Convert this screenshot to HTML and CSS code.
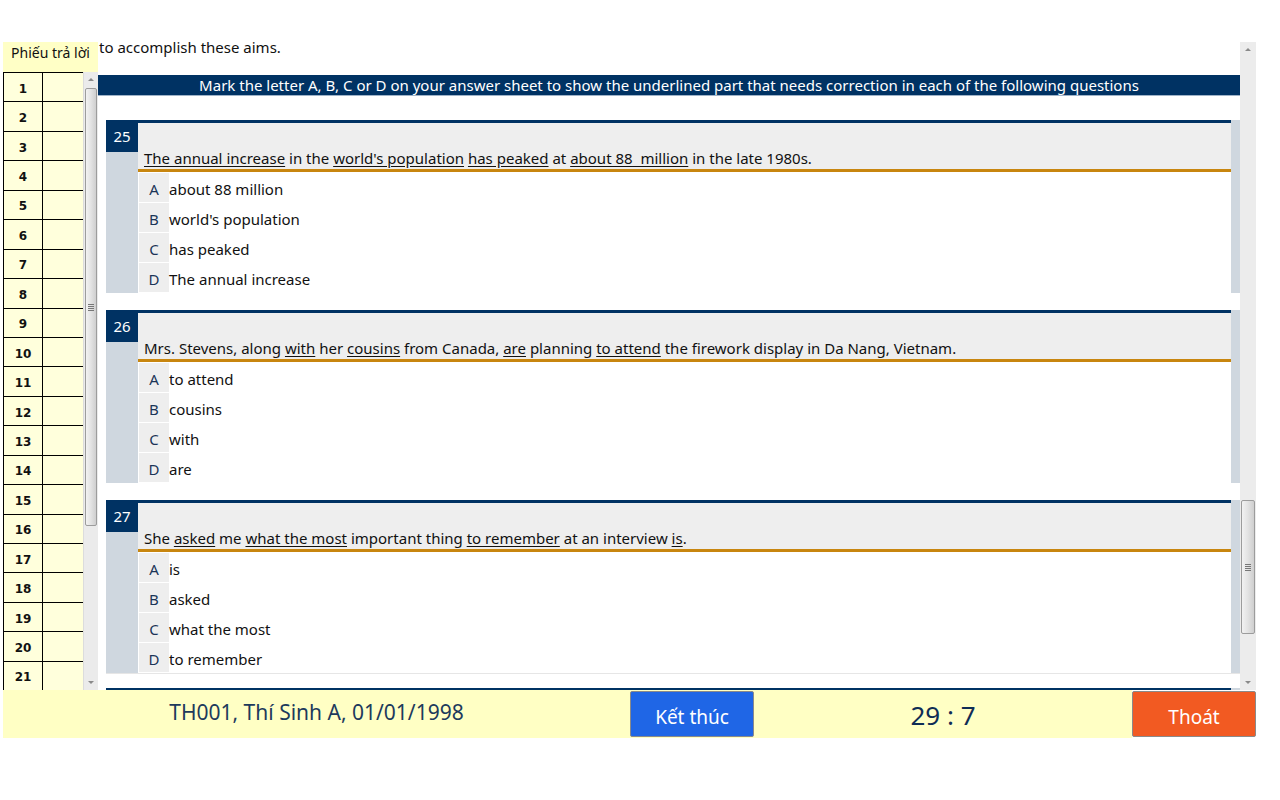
FILE: index.html
```html
<!DOCTYPE html>
<html lang="vi">
<head>
<meta charset="utf-8">
<title>Bài thi</title>
<link rel="stylesheet" href="styles.css">
</head>
<body>
<div class="app">
  <div class="top"></div>
  <div class="middle">
    <div class="sheet">
      <div class="sheet-head">Phiếu trả lời</div>
      <div class="sheet-body">
        <div class="grid">
          <div class="c n">1</div><div class="c"></div>
          <div class="c n">2</div><div class="c"></div>
          <div class="c n">3</div><div class="c"></div>
          <div class="c n">4</div><div class="c"></div>
          <div class="c n">5</div><div class="c"></div>
          <div class="c n">6</div><div class="c"></div>
          <div class="c n">7</div><div class="c"></div>
          <div class="c n">8</div><div class="c"></div>
          <div class="c n">9</div><div class="c"></div>
          <div class="c n">10</div><div class="c"></div>
          <div class="c n">11</div><div class="c"></div>
          <div class="c n">12</div><div class="c"></div>
          <div class="c n">13</div><div class="c"></div>
          <div class="c n">14</div><div class="c"></div>
          <div class="c n">15</div><div class="c"></div>
          <div class="c n">16</div><div class="c"></div>
          <div class="c n">17</div><div class="c"></div>
          <div class="c n">18</div><div class="c"></div>
          <div class="c n">19</div><div class="c"></div>
          <div class="c n">20</div><div class="c"></div>
          <div class="c n">21</div><div class="c"></div>
          <div class="c n"></div><div class="c"></div>
        </div>
        <div class="sbar sbar-left">
          <div class="arrow up"></div>
          <div class="track"><div class="thumb thumb-left"><span class="grip"></span></div></div>
          <div class="arrow down"></div>
        </div>
      </div>
    </div>
    <div class="main">
      <div class="content">
        <p class="tail">to accomplish these aims.</p>
        <div class="banner">Mark the letter A, B, C or D on your answer sheet to show the underlined part that needs correction in each of the following questions</div>

        <div class="q">
          <div class="q-side"><div class="q-num">25</div></div>
          <div class="q-body">
            <div class="q-stem"><span><u>The annual increase</u> in the <u>world's population</u> <u>has peaked</u> at <u>about 88&nbsp; million</u> in the late 1980s.</span></div>
            <div class="q-opts">
              <div class="opt"><span class="l">A</span><span class="t">about 88 million</span></div>
              <div class="opt"><span class="l">B</span><span class="t">world's population</span></div>
              <div class="opt"><span class="l">C</span><span class="t">has peaked</span></div>
              <div class="opt"><span class="l">D</span><span class="t">The annual increase</span></div>
            </div>
          </div>
        </div>

        <div class="q">
          <div class="q-side"><div class="q-num">26</div></div>
          <div class="q-body">
            <div class="q-stem"><span>Mrs. Stevens, along <u>with</u> her <u>cousins</u> from Canada, <u>are</u> planning <u>to attend</u> the firework display in Da Nang, Vietnam.</span></div>
            <div class="q-opts">
              <div class="opt"><span class="l">A</span><span class="t">to attend</span></div>
              <div class="opt"><span class="l">B</span><span class="t">cousins</span></div>
              <div class="opt"><span class="l">C</span><span class="t">with</span></div>
              <div class="opt"><span class="l">D</span><span class="t">are</span></div>
            </div>
          </div>
        </div>

        <div class="q q-last">
          <div class="q-side"><div class="q-num">27</div></div>
          <div class="q-body">
            <div class="q-stem"><span>She <u>asked</u> me <u>what the most</u> important thing <u>to remember</u> at an interview <u>is</u>.</span></div>
            <div class="q-opts">
              <div class="opt"><span class="l">A</span><span class="t">is</span></div>
              <div class="opt"><span class="l">B</span><span class="t">asked</span></div>
              <div class="opt"><span class="l">C</span><span class="t">what the most</span></div>
              <div class="opt"><span class="l">D</span><span class="t">to remember</span></div>
            </div>
          </div>
        </div>

        <div class="q q-next">
          <div class="q-side"><div class="q-num"></div></div>
          <div class="q-body">
            <div class="q-stem"></div>
          </div>
        </div>
      </div>
      <div class="sbar sbar-right">
        <div class="arrow up"></div>
        <div class="track"><div class="thumb thumb-right"><span class="grip"></span></div></div>
        <div class="arrow down"></div>
      </div>
    </div>
  </div>
  <div class="footer">
    <div class="info">TH001, Thí Sinh A, 01/01/1998</div>
    <button class="btn btn-end">Kết thúc</button>
    <div class="timer">29 : 7</div>
    <button class="btn btn-exit">Thoát</button>
  </div>
</div>
</body>
</html>
```

FILE: styles.css
```css
* { box-sizing: border-box; }
html, body { margin: 0; padding: 0; background: #fff; }
body {
  font-family: "Noto Sans", "Open Sans", "DejaVu Sans", sans-serif;
  font-size: 15px;
  color: #111;
}
.app { width: 1280px; height: 800px; overflow: hidden; }
.top { height: 42px; }

.middle { display: flex; height: 648px; }

/* answer sheet */
.sheet { margin-left: 3px; width: 95px; display: flex; flex-direction: column; }
.sheet-head {
  height: 30px;
  background: #ffffc6;
  font-size: 14px;
  line-height: 22px;
  padding-top: 0;
  text-align: center;
  color: #111;
}
.sheet-body { flex: 1; display: flex; min-height: 0; }
.grid {
  width: 80px;
  display: grid;
  grid-template-columns: 39px 41px;
  grid-auto-rows: 29.45px;
  border-top: 1px solid #000;
  border-left: 1px solid #000;
  overflow: hidden;
  background: #ffffdc;
  align-content: start;
}
.c { border-right: 1px solid #000; border-bottom: 1px solid #000; }
.n {
  font-family: "DejaVu Sans", sans-serif;
  font-weight: bold;
  font-size: 12px;
  display: flex;
  align-items: center;
  justify-content: center;
  padding-top: 3px;
}

/* scrollbars */
.sbar { background: #ebebeb; display: flex; flex-direction: column; }
.sbar-left { width: 15px; border-left: 1px solid #dcdcdc; }
.sbar-right { width: 16px; background: #ececec; }
.arrow { height: 16px; position: relative; }
.arrow::after {
  content: "";
  position: absolute;
  left: 50%;
  top: 50%;
  margin-left: -3px;
  border-left: 3px solid transparent;
  border-right: 3px solid transparent;
}
.arrow.up::after { border-bottom: 3px solid #8a8a8a; margin-top: -2px; }
.arrow.down::after { border-top: 3px solid #8a8a8a; margin-top: -1px; }
.track { flex: 1; position: relative; }
.thumb {
  position: absolute;
  left: 1px;
  right: 1px;
  border: 1px solid #9c9c9c;
  border-radius: 2px;
  background: linear-gradient(to right, #f2f2f2 0%, #e4e4e4 45%, #cfcfcf 100%);
  display: flex;
  align-items: center;
  justify-content: center;
}
.thumb-left { top: 0; height: 438px; }
.thumb-right { top: 442px; height: 134px; }
.grip {
  width: 6px;
  height: 7px;
  background: repeating-linear-gradient(to bottom, #777 0, #777 1px, transparent 1px, transparent 2px);
}

/* main */
.main { width: 1158px; display: flex; }
.content { width: 1142px; overflow: visible; clip-path: inset(-8px 0 0 0); }
.tail { margin: -5px 0 0 1px; line-height: 20px; font-size: 15px; }
.banner {
  margin-top: 18px;
  height: 21px;
  background: #003263;
  border-bottom: 1px solid #9fb3c8;
  color: #fff;
  text-align: center;
  font-size: 15px;
  line-height: 20px;
}
.q {
  margin: 24px 0 0 8px;
  display: flex;
  background: #cfd7df;
  padding-right: 9px;
  height: 173px;
}
.q + .q { margin-top: 17px; }
.q-last { border-bottom: 1px solid #e6e6e6; height: 174px; }
.q + .q-next { margin-top: 14px; height: 20px; }
.q-side { width: 32px; }
.q-num {
  height: 32px;
  background: #003263;
  color: #fff;
  font-size: 15px;
  line-height: 32px;
  text-align: center;
}
.q-next .q-num { height: 20px; }
.q-body { flex: 1; background: #fff; }
.q-next .q-stem { height: 20px; }
.q-stem {
  height: 52px;
  background: #eeeeee;
  border-top: 3px solid #003263;
  border-bottom: 3px solid #c8860f;
  padding: 0 6px 1px 6px;
  display: flex;
  align-items: flex-end;
  line-height: 20px;
  color: #111;
}
.q-stem u { text-underline-offset: 2px; }
.q-opts { padding-top: 1px; }
.opt { height: 29px; margin-bottom: 1px; display: flex; align-items: stretch; }
.l {
  width: 30px;
  margin-left: 1px;
  background: #eeeeee;
  color: #1b3558;
  text-align: center;
  line-height: 25px;
  padding-top: 4px;
}
.t { line-height: 25px; padding-top: 4px; color: #111; }

/* footer */
.footer {
  position: relative;
  margin-left: 3px;
  width: 1253px;
  height: 48px;
  display: flex;
  background: linear-gradient(to right, #ffffc4 0, #ffffc4 1129px, #fff 1129px);
}
.info {
  width: 627px;
  text-align: center;
  font-size: 21px;
  line-height: 44px;
  color: #1d3a5c;
}
.timer {
  width: 378px;
  text-align: center;
  font-size: 26px;
  line-height: 50px;
  color: #0f2d55;
}
.btn {
  width: 124px;
  height: 46px;
  margin-top: 1px;
  border: 1px solid #8a8a8a;
  border-radius: 2px;
  color: #fff;
  font-family: "Noto Sans", "Open Sans", sans-serif;
  font-size: 19px;
  padding: 5px 0 0 0;
}
.btn-end { background: #1f66e6; }
.btn-exit { background: #f25a22; }
```
